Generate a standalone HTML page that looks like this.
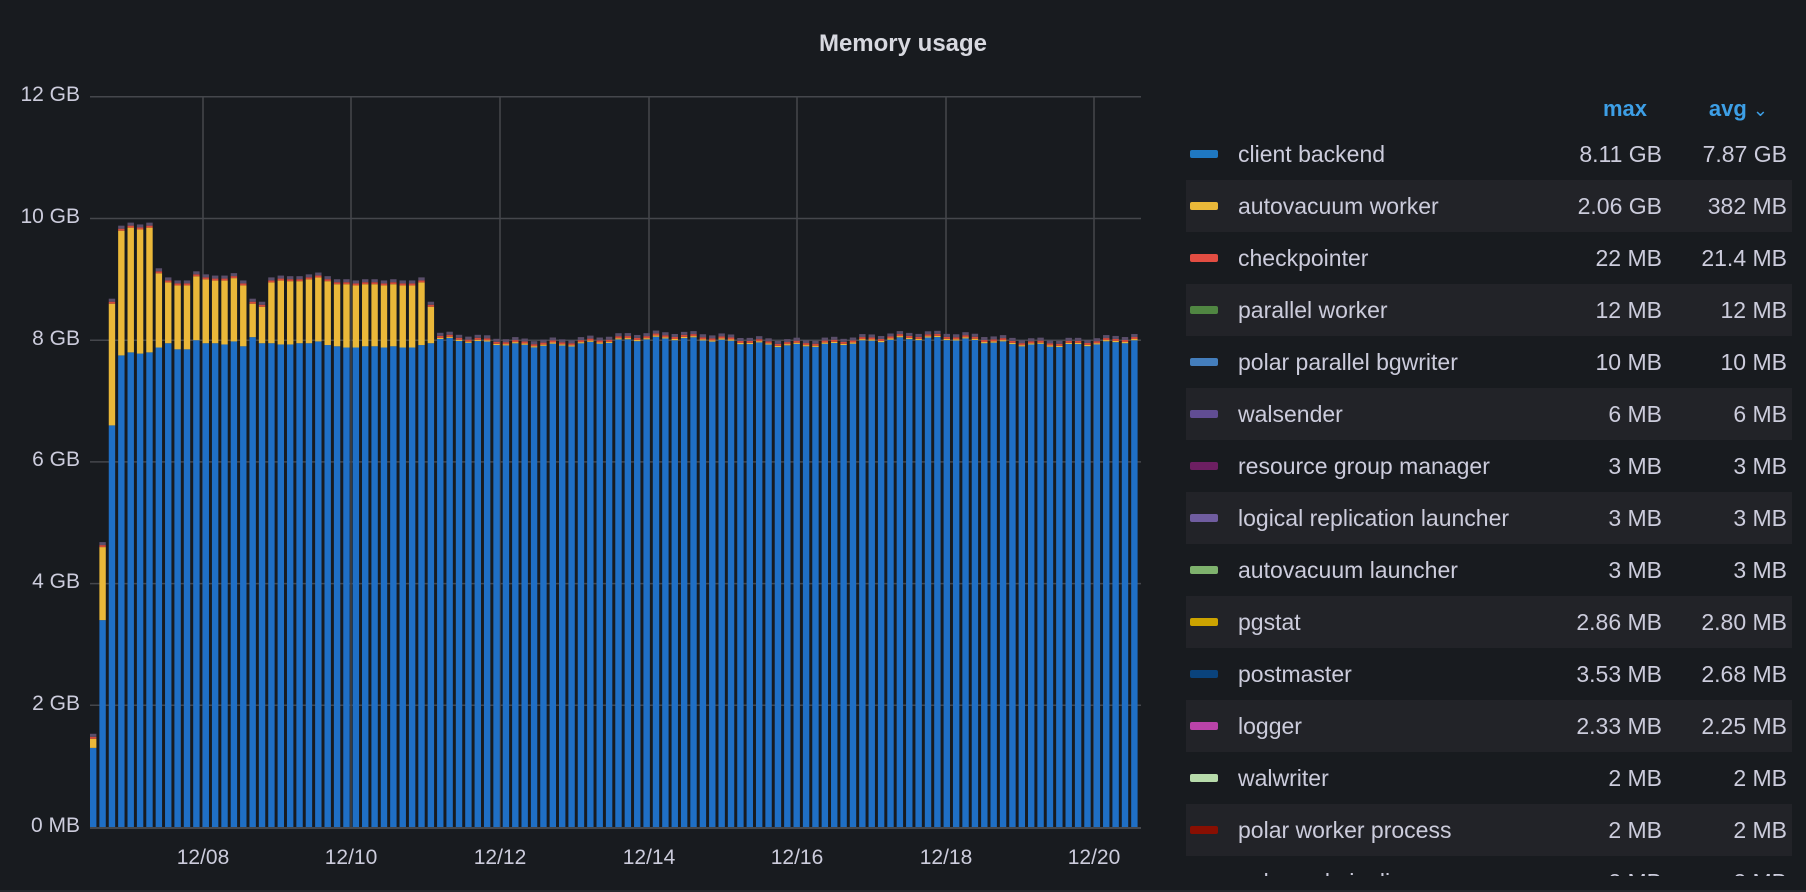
<!DOCTYPE html>
<html><head><meta charset="utf-8">
<style>
html,body{margin:0;padding:0;background:#181b1f;width:1806px;height:892px;overflow:hidden;font-family:"Liberation Sans",sans-serif;color:#ccccdc}
.title{position:absolute;top:30px;left:0;width:1806px;text-align:center;font-weight:bold;font-size:24px;color:#d8d9e0}
.yl{position:absolute;left:0;width:80px;text-align:right;font-size:21px;color:#ccccdc}
.xl{position:absolute;top:846px;font-size:21px;width:80px;text-align:center;color:#ccccdc}
#legend{position:absolute;left:1186px;top:88px;width:606px;height:788px;overflow:hidden}
.hdr{position:absolute;top:8px;font-size:22px;color:#3d9fe6;font-weight:bold}
.row{position:absolute;left:0;width:606px;height:52px;font-size:23px}
.row.alt{background:#222328}
.sw{position:absolute;left:4px;top:22px;width:28px;height:8px;border-radius:2px}
.nm{position:absolute;left:52px;top:13px}
.mx{position:absolute;right:130px;top:13px}
.av{position:absolute;right:5px;top:13px}
.bottom{position:absolute;left:0;top:890px;width:1806px;height:2px;background:#24272d}
</style></head><body>
<div class="title">Memory usage</div>
<svg id="chart" width="1806" height="892" style="position:absolute;left:0;top:0"></svg>
<div class="yl" style="top:83px">12 GB</div>
<div class="yl" style="top:205px">10 GB</div>
<div class="yl" style="top:327px">8 GB</div>
<div class="yl" style="top:448px">6 GB</div>
<div class="yl" style="top:570px">4 GB</div>
<div class="yl" style="top:692px">2 GB</div>
<div class="yl" style="top:814px">0 MB</div>
<div class="xl" style="left:163px">12/08</div>
<div class="xl" style="left:311px">12/10</div>
<div class="xl" style="left:460px">12/12</div>
<div class="xl" style="left:609px">12/14</div>
<div class="xl" style="left:757px">12/16</div>
<div class="xl" style="left:906px">12/18</div>
<div class="xl" style="left:1054px">12/20</div>
<div id="legend">
<div class="hdr" style="right:145px">max</div>
<div class="hdr" style="right:24px">avg <span style="font-weight:normal;font-size:18px">&#8964;</span></div>
</div>
<div class="bottom"></div>
<script>
var svg=document.getElementById('chart');var ns='http://www.w3.org/2000/svg';
function el(t,a){var e=document.createElementNS(ns,t);for(var k in a)e.setAttribute(k,a[k]);svg.appendChild(e);return e;}
var X0=90,X1=1141,Y0=827,S=60.85;
for(var i=1;i<=6;i++){el('line',{x1:X0,x2:X1,y1:Y0-i*2*S,y2:Y0-i*2*S,stroke:'#45474c','stroke-width':1.5});}
[203,351,500,649,797,946,1094].forEach(function(x){el('line',{x1:x,x2:x,y1:Y0-12*S,y2:Y0,stroke:'#45474c','stroke-width':1.5});});
var b=[1.3,3.4,6.6,7.75,7.8,7.78,7.8,7.88,7.95,7.85,7.85,8.0,7.95,7.95,7.93,7.98,7.9,8.05,7.95,7.95,7.93,7.93,7.95,7.95,7.98,7.92,7.9,7.88,7.88,7.9,7.9,7.88,7.9,7.88,7.88,7.92,7.95];
var t=[1.45,4.6,8.6,9.8,9.85,9.82,9.85,9.1,8.95,8.9,8.9,9.05,9.0,8.98,8.98,9.02,8.9,8.6,8.55,8.95,8.98,8.97,8.97,9.0,9.03,8.97,8.92,8.92,8.9,8.92,8.92,8.9,8.92,8.9,8.9,8.95,8.55];
var N=112,step=9.38;
for(var i=0;i<N;i++){
 var bl,tp;
 if(i<b.length){bl=b[i];tp=t[i];}
 else{bl=7.97+0.06*Math.sin(i*0.23)+0.03*Math.sin(i*1.7);tp=bl+0.02;}
 var x=X0+i*step;
 var yb=Y0-bl*S,yt=Y0-tp*S;
 el('rect',{x:x,y:yb,width:6.4,height:Y0-yb,fill:'#1f6fc5'});
 el('rect',{x:x,y:yt,width:6.4,height:yb-yt,fill:'#eab839'});
 el('rect',{x:x,y:yt-2,width:6.4,height:2,fill:'#d44a3a'});
 el('rect',{x:x,y:yt-5,width:6.4,height:3,fill:'#5a4e6a'});
}
el('line',{x1:X0,x2:X1,y1:Y0+1,y2:Y0+1,stroke:'#45474c','stroke-width':2});
var L=[["client backend","#1f78c1","8.11 GB","7.87 GB"],["autovacuum worker","#eab839","2.06 GB","382 MB"],["checkpointer","#e24d42","22 MB","21.4 MB"],["parallel worker","#508642","12 MB","12 MB"],["polar parallel bgwriter","#447ebc","10 MB","10 MB"],["walsender","#614d93","6 MB","6 MB"],["resource group manager","#6d1f62","3 MB","3 MB"],["logical replication launcher","#705da0","3 MB","3 MB"],["autovacuum launcher","#7eb26d","3 MB","3 MB"],["pgstat","#cca300","2.86 MB","2.80 MB"],["postmaster","#0a437c","3.53 MB","2.68 MB"],["logger","#ba43a9","2.33 MB","2.25 MB"],["walwriter","#b7dbab","2 MB","2 MB"],["polar worker process","#890f02","2 MB","2 MB"],["polar wal pipeline","#6ed0e0","2 MB","2 MB"]];
var lg=document.getElementById('legend');
L.forEach(function(r,i){var d=document.createElement('div');d.className='row'+(i%2?' alt':'');d.style.top=(40+i*52)+'px';
d.innerHTML='<div class="sw" style="background:'+r[1]+'"></div><div class="nm">'+r[0]+'</div><div class="mx">'+r[2]+'</div><div class="av">'+r[3]+'</div>';lg.appendChild(d);});
</script>
</body></html>
